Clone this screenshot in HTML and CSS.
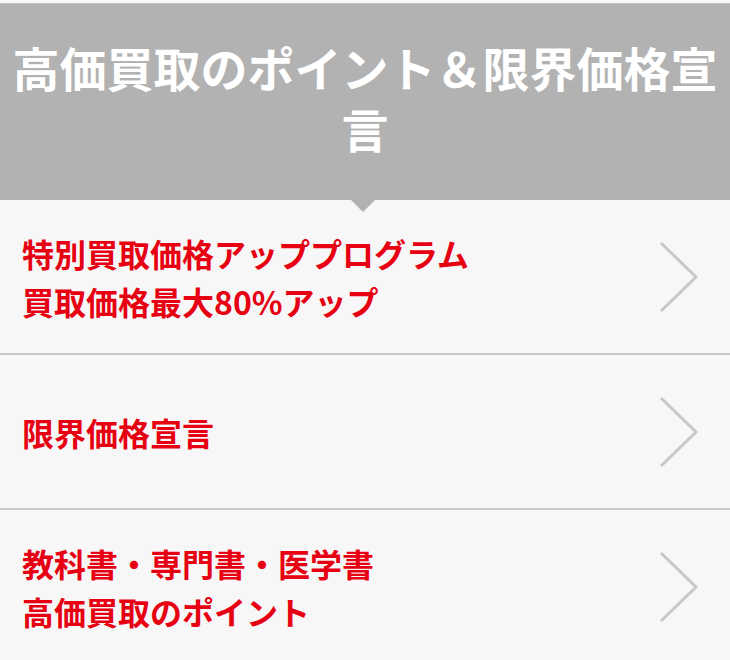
FILE: index.html
```html
<!DOCTYPE html>
<html lang="ja">
<head>
  <meta charset="UTF-8">
  <meta name="viewport" content="width=device-width, initial-scale=1.0">
  <title>高価買取のポイント＆限界価格宣言</title>
  <link rel="stylesheet" href="styles.css">
</head>
<body>

  <div class="point-box">
    <h2 class="point-title">高価買取のポイント＆限界価格宣言</h2>

    <ul class="point-list">
      <li>
        <a href="#" class="point-link">
          <span class="point-text">特別買取価格アッププログラム<br>買取価格最大80%アップ</span>
          <svg class="chevron" width="40" height="72" viewBox="0 0 40 72">
            <polyline points="2,2 37,36 2,70" />
          </svg>
        </a>
      </li>
      <li>
        <a href="#" class="point-link">
          <span class="point-text">限界価格宣言</span>
          <svg class="chevron" width="40" height="72" viewBox="0 0 40 72">
            <polyline points="2,2 37,36 2,70" />
          </svg>
        </a>
      </li>
      <li>
        <a href="#" class="point-link">
          <span class="point-text">教科書・専門書・医学書<br>高価買取のポイント</span>
          <svg class="chevron" width="40" height="72" viewBox="0 0 40 72">
            <polyline points="2,2 37,36 2,70" />
          </svg>
        </a>
      </li>
    </ul>
  </div>

</body>
</html>
```

FILE: styles.css
```css
body {
  font-family: "Noto Sans CJK JP", "Liberation Sans", sans-serif;
  background-color: #f7f7f7;
  margin: 0;
  padding-top: 3px;
}

.point-box {
  border-top: 1px solid #c4c4c4;
}

.point-title {
  position: relative;
  margin: 0;
  padding: 32px 8px 42px;
  background-color: #b2b2b2;
  color: #fff;
  font-size: 47px;
  font-weight: bold;
  line-height: 61px;
  text-align: center;
}

/* little arrow under the heading */
.point-title::after {
  content: "";
  position: absolute;
  left: 351px;
  bottom: -12px;
  border-top: 12px solid #b2b2b2;
  border-left: 12px solid transparent;
  border-right: 12px solid transparent;
}

.point-list {
  list-style: none;
  margin: 0;
  padding: 0;
}

.point-list li {
  border-bottom: 2px solid #c8c8c8;
}

.point-link {
  display: flex;
  align-items: center;
  justify-content: space-between;
  min-height: 153px;
  padding: 0 31px 0 22px;
  box-sizing: border-box;
  color: #e60012;
  text-decoration: none;
}

.point-text {
  font-size: 32px;
  font-weight: bold;
  line-height: 48px;
}

.chevron {
  flex-shrink: 0;
}

.chevron polyline {
  fill: none;
  stroke: #c8c8c8;
  stroke-width: 3;
}
```
